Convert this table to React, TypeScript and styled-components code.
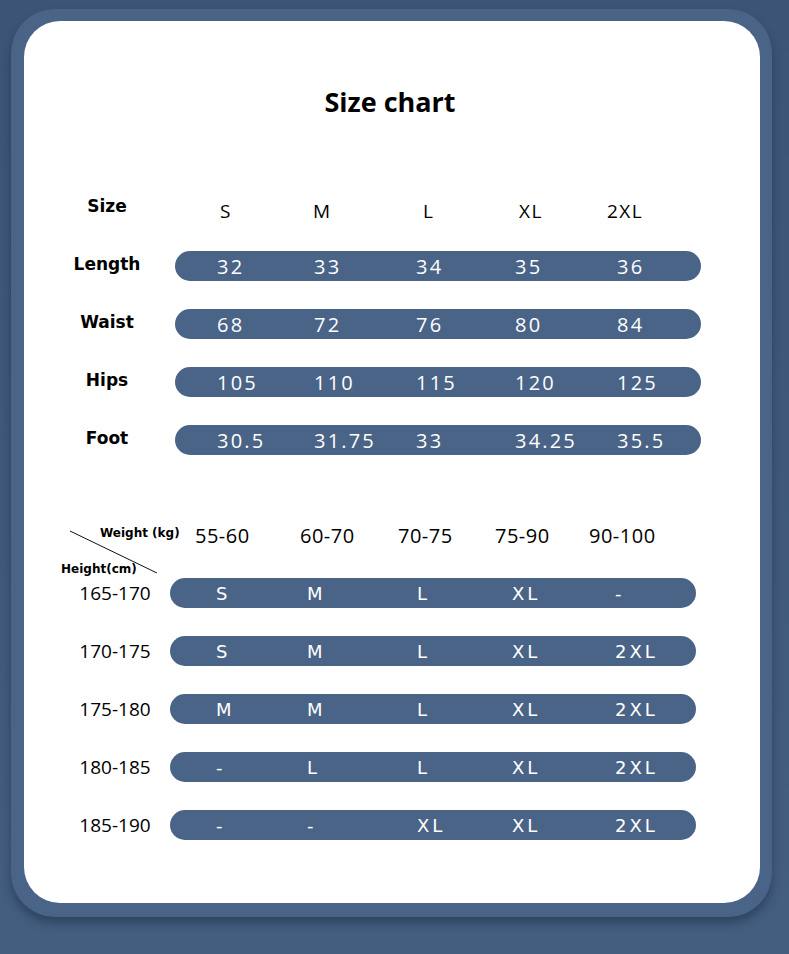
import styled, { createGlobalStyle } from "styled-components";

const GlobalStyle = createGlobalStyle`
  html, body {
    margin: 0;
    padding: 0;
    background: #41597a;
  }
  body {
    font-family: "Open Sans", "Liberation Sans", sans-serif;
  }
`;

const sizeHeader = ["S", "M", "L", "XL", "2XL"];

const sizeRows = [
  { label: "Length", values: ["32", "33", "34", "35", "36"] },
  { label: "Waist", values: ["68", "72", "76", "80", "84"] },
  { label: "Hips", values: ["105", "110", "115", "120", "125"] },
  { label: "Foot", values: ["30.5", "31.75", "33", "34.25", "35.5"] },
];

const weightHeader = ["55-60", "60-70", "70-75", "75-90", "90-100"];

const heightRows = [
  { label: "165-170", values: ["S", "M", "L", "XL", "-"] },
  { label: "170-175", values: ["S", "M", "L", "XL", "2XL"] },
  { label: "175-180", values: ["M", "M", "L", "XL", "2XL"] },
  { label: "180-185", values: ["-", "L", "L", "XL", "2XL"] },
  { label: "185-190", values: ["-", "-", "XL", "XL", "2XL"] },
];

function App() {
  return (
    <>
      <GlobalStyle />
      <Page>
        <Frame>
          <Card>
            <Title>Size chart</Title>

            <Table $left={28} $label={110} $gap={13}>
              <RowLabel $bold>Size</RowLabel>
              <Cols $pad={45} $cols="93px 110px 96px 88px 1fr">
                {sizeHeader.map((s) => (
                  <HeadCell key={s}>{s}</HeadCell>
                ))}
              </Cols>
              {sizeRows.map((row) => (
                <Row key={row.label}>
                  <RowLabel $bold>{row.label}</RowLabel>
                  <Bar $pad={42} $cols="97px 102px 99px 102px 1fr">
                    {row.values.map((v, i) => (
                      <BarValue key={i}>{v}</BarValue>
                    ))}
                  </Bar>
                </Row>
              ))}
            </Table>

            <Table $left={36} $label={110} $gap={0} $top={65}>
              <Corner>
                <svg width="110" height="60" viewBox="0 0 110 60">
                  <line x1="10" y1="11" x2="97" y2="53" stroke="#111" strokeWidth="1" />
                </svg>
                <CornerText $x={40} $y={6}>Weight (kg)</CornerText>
                <CornerText $x={1} $y={42}>Height(cm)</CornerText>
              </Corner>
              <Cols $pad={25} $cols="105px 98px 97px 94px 1fr">
                {weightHeader.map((w) => (
                  <HeadCell key={w} $tight>
                    {w}
                  </HeadCell>
                ))}
              </Cols>
              {heightRows.map((row) => (
                <Row key={row.label}>
                  <RowLabel>{row.label}</RowLabel>
                  <Bar $pad={46} $cols="91px 110px 95px 103px 1fr">
                    {row.values.map((v, i) => (
                      <SizeValue key={i}>{v}</SizeValue>
                    ))}
                  </Bar>
                </Row>
              ))}
            </Table>
          </Card>
        </Frame>
      </Page>
    </>
  );
}

export default App;

const Page = styled.div`
  width: 789px;
  height: 954px;
  padding: 9px 0 0 11px;
  box-sizing: border-box;
  background: linear-gradient(180deg, #3c5576 0%, #445e80 100%);
  overflow: hidden;
`;

const Frame = styled.div`
  width: 761px;
  height: 908px;
  box-sizing: border-box;
  padding: 12px 12px 14px 13px;
  background: #4a6487;
  border-radius: 44px;
  box-shadow: 0 6px 10px rgba(20, 35, 60, 0.45);
`;

const Card = styled.div`
  height: 100%;
  box-sizing: border-box;
  background: #ffffff;
  border-radius: 36px;
  padding-top: 61px;
  display: flex;
  flex-direction: column;
`;

const Title = styled.h1`
  margin: 0 0 71px;
  height: 40px;
  line-height: 40px;
  text-align: center;
  font-family: "Open Sans", sans-serif;
  font-size: 27px;
  font-weight: 700;
  color: #000;
  padding-right: 4px;
`;

const Table = styled.div<{ $left: number; $label: number; $gap: number; $top?: number }>`
  display: grid;
  grid-template-columns: ${(p) => p.$label}px 526px;
  column-gap: ${(p) => p.$gap}px;
  grid-auto-rows: 30px;
  row-gap: 28px;
  margin-left: ${(p) => p.$left}px;
  margin-top: ${(p) => p.$top ?? 0}px;
`;

const Row = styled.div`
  display: contents;
`;

const RowLabel = styled.div<{ $bold?: boolean }>`
  display: flex;
  align-items: center;
  justify-content: center;
  font-family: ${(p) => (p.$bold ? `"DejaVu Sans", sans-serif` : `"Open Sans", sans-serif`)};
  font-weight: ${(p) => (p.$bold ? 700 : 400)};
  font-size: ${(p) => (p.$bold ? "17px" : "19px")};
  color: #000;
  margin-top: ${(p) => (p.$bold ? "-5px" : "0")};
`;

const Cols = styled.div<{ $pad: number; $cols: string }>`
  display: grid;
  grid-template-columns: ${(p) => p.$cols};
  align-items: center;
  padding-left: ${(p) => p.$pad}px;
`;

const Bar = styled(Cols)`
  background: #4a6487;
  border-radius: 15px;
  height: 30px;
`;

const HeadCell = styled.span<{ $tight?: boolean }>`
  font-family: "Open Sans", sans-serif;
  font-size: ${(p) => (p.$tight ? "20px" : "19px")};
  letter-spacing: ${(p) => (p.$tight ? "0.5px" : "1.5px")};
  margin-top: ${(p) => (p.$tight ? "0" : "5px")};
  color: #000;
  white-space: nowrap;
`;

const BarValue = styled.span`
  font-family: "Open Sans", sans-serif;
  font-size: 20px;
  letter-spacing: 2.2px;
  color: #fff;
  white-space: nowrap;
  margin-top: 1px;
`;

const SizeValue = styled.span`
  font-family: "DejaVu Sans", sans-serif;
  font-size: 18px;
  letter-spacing: 3px;
  color: #fff;
  white-space: nowrap;
`;

const Corner = styled.div`
  position: relative;
  & svg {
    position: absolute;
    left: 0;
    top: 0;
    overflow: visible;
  }
`;

const CornerText = styled.span<{ $x: number; $y: number }>`
  position: absolute;
  left: ${(p) => p.$x}px;
  top: ${(p) => p.$y}px;
  font-family: "DejaVu Sans", sans-serif;
  font-weight: 700;
  font-size: 12px;
  color: #000;
  white-space: nowrap;
`;
